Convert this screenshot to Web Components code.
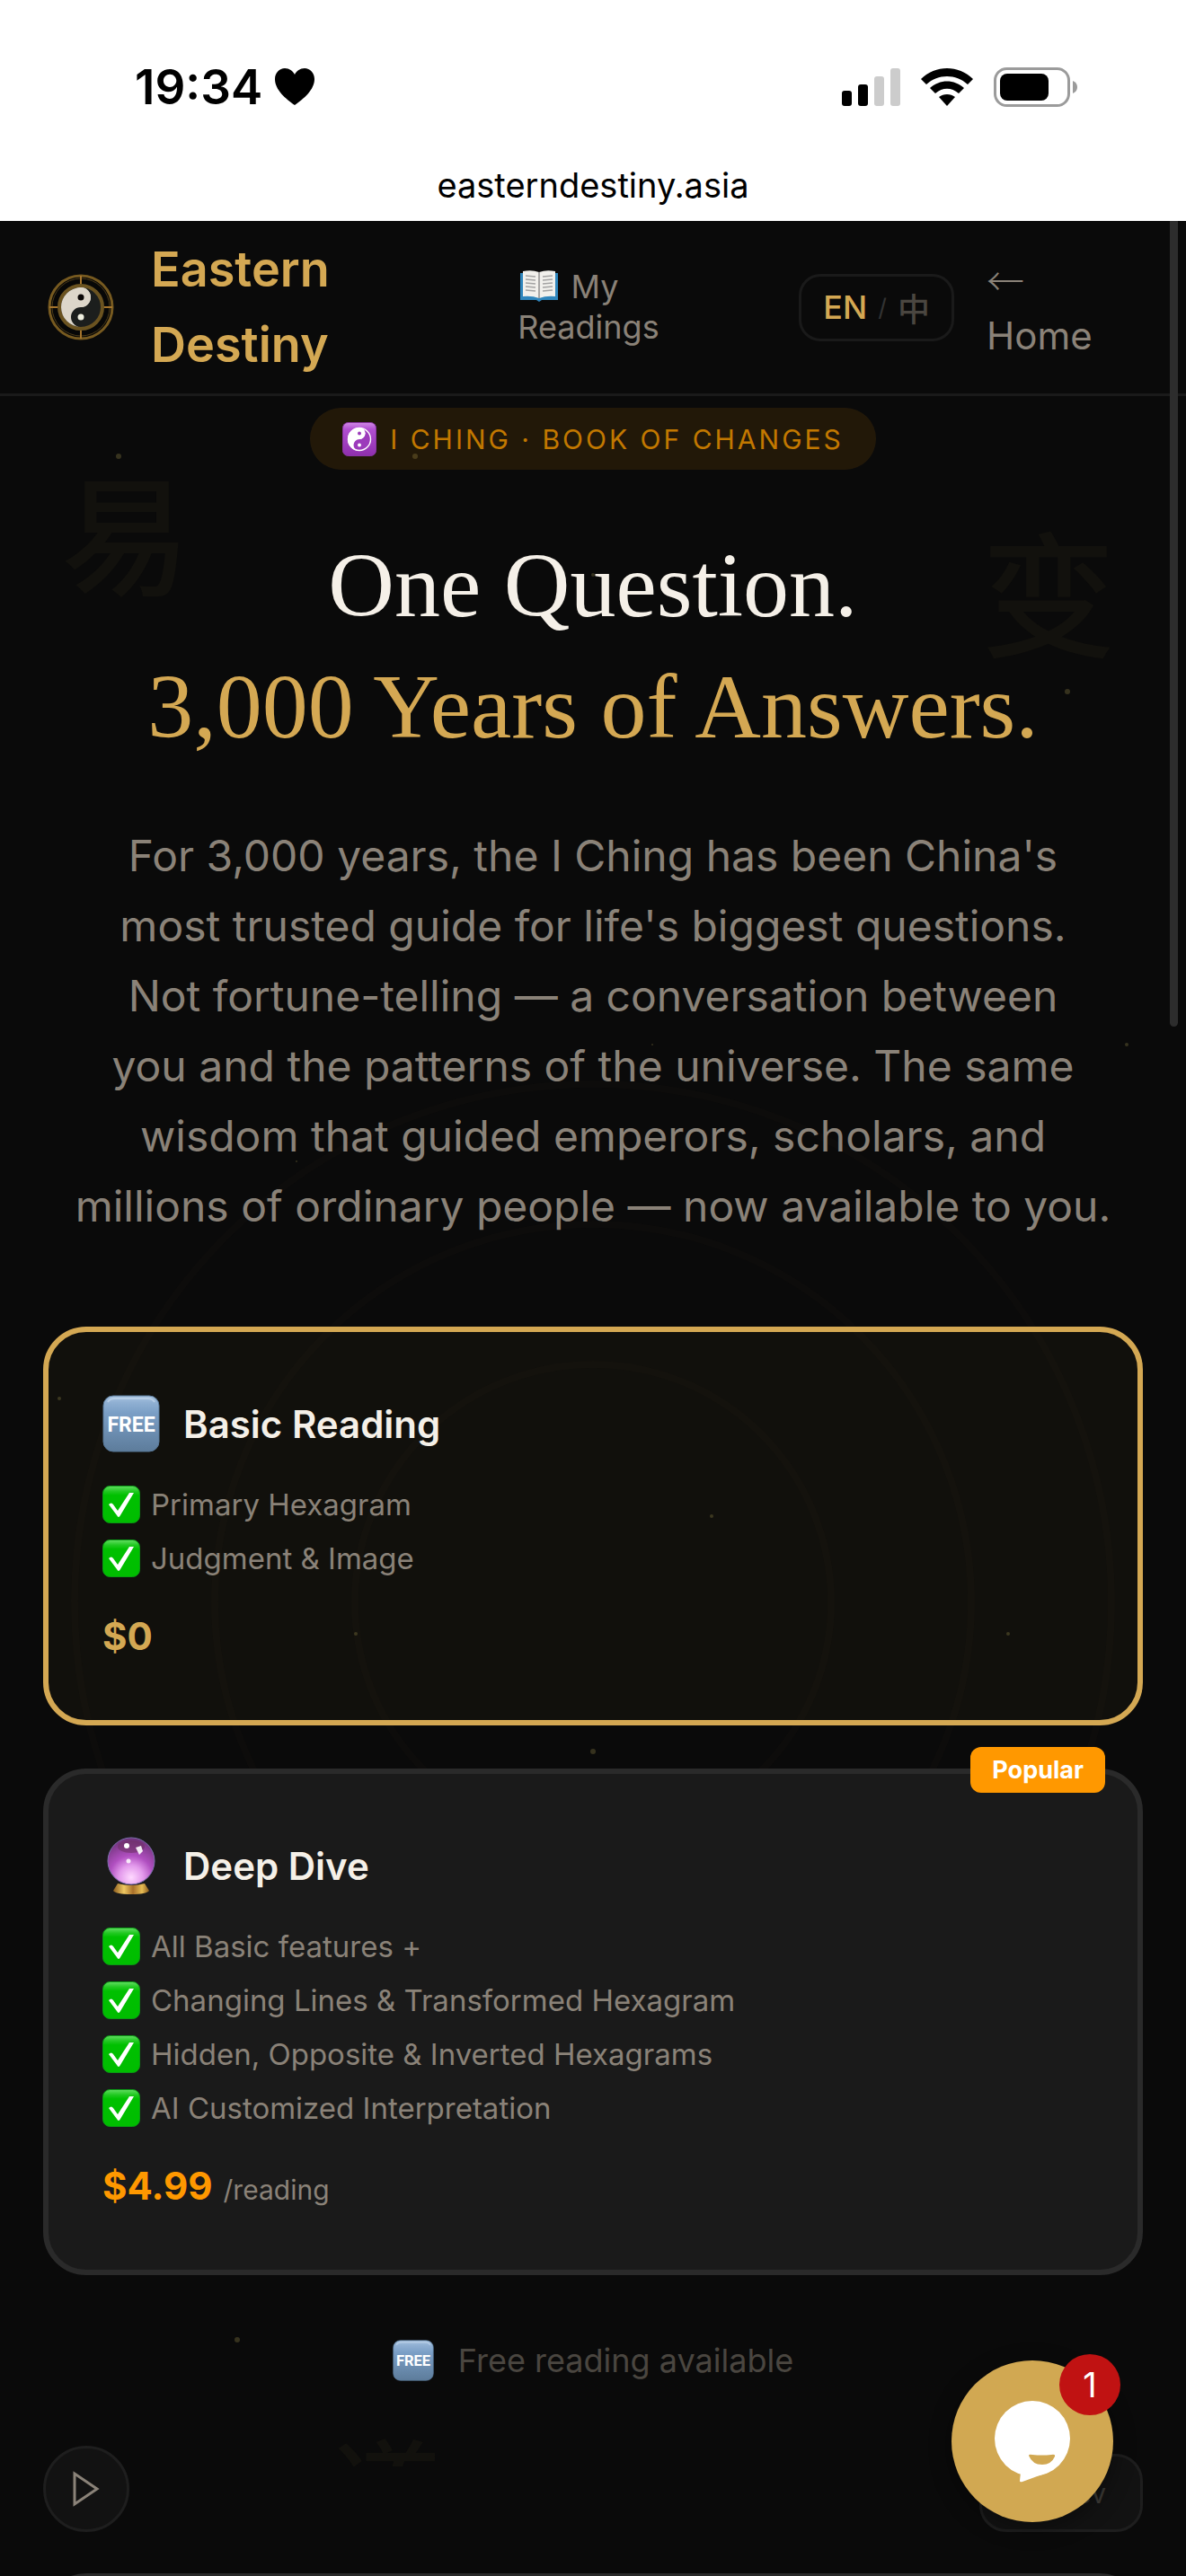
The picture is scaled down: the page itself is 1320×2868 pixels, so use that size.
<!DOCTYPE html>
<html lang="en">
<head>
<meta charset="utf-8">
<meta name="viewport" content="width=device-width, initial-scale=1">
<title>Eastern Destiny</title>
<style>
    html, body {
        margin: 0;
        background: #0a0a0a;
    }

    body {
        --gold: #d4a853;
        --orange: #ff9800;
        --muted: #8a8278;
        --text: #f5f0e8;
        height: 100vh;
        overflow: hidden;
        font-family: Inter, "Noto Sans CJK SC", sans-serif;
        color: var(--text);
    }
</style>
</head>
<body>
<destiny-app></destiny-app>

<script>
// shared drawings, used in more than one element
const icons = {
    free: `
    <svg viewBox="0 0 64 64" role="img" aria-label="free">
        <defs><linearGradient id="f" x1="0" y1="0" x2="0" y2="1">
            <stop offset="0" stop-color="#a9c4e0"/><stop offset=".12" stop-color="#90b0d3"/>
            <stop offset=".3" stop-color="#7b9fc6"/><stop offset="1" stop-color="#5d7c9b"/>
        </linearGradient></defs>
        <rect x="1" y="1" width="62" height="62" rx="11" fill="url(#f)" stroke="#587898" stroke-width="1"/>
        <path d="M6 8q2-4 8-4h36q6 0 8 4" fill="none" stroke="#c9dcf0" stroke-width="2" opacity=".6"/>
        <text x="32" y="41" text-anchor="middle" font-family="Roboto, sans-serif" font-weight="700" font-size="23" fill="#fff">FREE</text>
    </svg>`,
    check: `
    <svg viewBox="0 0 42 42" aria-hidden="true">
        <defs><linearGradient id="c" x1="0" y1="0" x2="0" y2="1">
            <stop offset="0" stop-color="#63dd63"/><stop offset=".14" stop-color="#22c922"/>
            <stop offset=".25" stop-color="#00c000"/><stop offset="1" stop-color="#00bd00"/>
        </linearGradient></defs>
        <rect x=".5" y=".5" width="41" height="41" rx="8" fill="url(#c)" stroke="#0a9a14"/>
        <path d="M7 21q3-3 5 0l5 7L30 8h5L20 33q-2 4-4 0z" fill="#fff"/>
    </svg>`,
    ball: `
    <svg viewBox="0 0 64 64" role="img" aria-label="crystal ball">
        <defs>
            <radialGradient id="b" cx=".5" cy=".85" r=".85">
                <stop offset="0" stop-color="#ffd9ff"/><stop offset=".3" stop-color="#e39aec"/>
                <stop offset=".55" stop-color="#b04fc0"/><stop offset="1" stop-color="#6d3277"/>
            </radialGradient>
            <linearGradient id="g"><stop offset="0" stop-color="#8a5a1c"/><stop offset=".3" stop-color="#f0c963"/>
                <stop offset=".55" stop-color="#a86f2a"/><stop offset=".8" stop-color="#e8bd54"/><stop offset="1" stop-color="#8a5a1c"/></linearGradient>
        </defs>
        <path d="M17 52q15 4 30 0l5 8q-3 4-20 4T12 60z" fill="url(#g)"/>
        <circle cx="32" cy="27" r="26" fill="url(#b)" stroke="#7d6fae" stroke-width="1"/>
        <ellipse cx="32" cy="11" rx="15" ry="7" fill="#6b2f60" opacity=".55"/>
        <circle cx="27" cy="10" r="3" fill="#fff"/>
        <path d="M37 12l6-2 2 6-4 4z" fill="#fff" opacity=".9"/>
        <circle cx="29" cy="27" r="2.5" fill="#fff" opacity=".85"/>
    </svg>`,
    yinyang: `
    <svg viewBox="0 0 38 38" aria-hidden="true">
        <defs><linearGradient id="y" x1="0" y1="0" x2="0" y2="1">
            <stop offset="0" stop-color="#d18ae6"/><stop offset=".2" stop-color="#b14fd0"/><stop offset="1" stop-color="#8f2fae"/>
        </linearGradient></defs>
        <rect x=".5" y=".5" width="37" height="37" rx="6" fill="url(#y)" stroke="#8a35a5"/>
        <circle cx="19" cy="19" r="12.5" fill="#9c3bbb" stroke="#fff" stroke-width="1.4"/>
        <path d="M19 6a13 13 0 0 0 0 26a6.5 6.5 0 0 1 0-13a6.5 6.5 0 0 0 0-13z" fill="#fff"/>
        <circle cx="19" cy="12.5" r="6.5" fill="#fff"/>
        <circle cx="19" cy="12.5" r="2" fill="#9c3bbb"/>
        <circle cx="19" cy="25.5" r="2" fill="#fff"/>
    </svg>`,
    book: `
    <svg viewBox="0 0 42 36" aria-hidden="true">
        <path d="M0 3h42v30H24l-3 2-3-2H0z" fill="#2f86bd"/>
        <path d="M3 1q10-2 18 1q8-3 18-1v28q-10-1-18 2q-8-3-18-2z" fill="#f1f0ec"/>
        <path d="M21 2v29" stroke="#8f8f8f" stroke-width="1.5"/>
        <path d="M6 6l11 1M6 10l11 1M6 14l11 1M6 18l11 1M6 22l11 1M25 7l11-1M25 11l11-1M25 15l11-1M25 19l11-1M25 23l11-1" stroke="#a3a3a3" stroke-width="1.5"/>
    </svg>`,
    logo: `
    <svg viewBox="0 0 74 74" role="img" aria-label="Eastern Destiny logo">
        <circle cx="37" cy="37" r="35" fill="#070707" stroke="#775a20" stroke-width="3"/>
        <circle cx="37" cy="37" r="32" fill="none" stroke="#4b3a18" stroke-width="1"/>
        <path d="M37 2v11M37 61v11M2 37h11M61 37h11" stroke="#a4742c" stroke-width="2"/>
        <circle cx="37" cy="37" r="24" fill="#1c1e1d" stroke="#6b5320" stroke-width="4"/>
        <path d="M37 15a22 22 0 0 0 0 44a11 11 0 0 1 0-22a11 11 0 0 0 0-22z" fill="#ddd6ca"/>
        <circle cx="37" cy="26" r="11" fill="#ddd6ca"/>
        <circle cx="37" cy="26" r="3.5" fill="#0b0706"/>
        <circle cx="37" cy="48" r="3.5" fill="#efefe0"/>
    </svg>`
};

class StatusBar extends HTMLElement {
    constructor() {
        super();
        this.attachShadow({ mode: "open" }).innerHTML = `
        <style>
            :host {
                display: block;
                background: #fff;
                color: #000;
                height: 246px;
            }
            .row {
                display: flex;
                justify-content: space-between;
                align-items: center;
                padding: 66px 120px 0 150px;
                height: 62px;
            }
            .time {
                display: flex;
                align-items: center;
                gap: 14px;
                font-size: 53px;
                font-weight: 600;
            }
            .signals {
                display: flex;
                align-items: center;
                gap: 23px;
            }
            svg { display: block; }
            .url {
                text-align: center;
                font-size: 38px;
                line-height: 48px;
                padding-top: 54px;
            }
        </style>
        <div class="row">
            <div class="time"><span>19:34</span>
                <svg width="44" height="42" viewBox="0 0 44 42" aria-hidden="true"><path d="M22 41C12 34 0 24 0 12C0 5 5 0 11 0c5 0 9 3 11 7c2-4 6-7 11-7c6 0 11 5 11 12c0 12-12 22-22 29z"/></svg>
            </div>
            <div class="signals">
                <svg width="65" height="42" viewBox="0 0 65 42" aria-hidden="true">
                    <rect y="25" width="11" height="17" rx="3"/>
                    <rect x="18" y="18" width="11" height="24" rx="3"/>
                    <rect x="36" y="9" width="11" height="33" rx="3" fill="#ccc"/>
                    <rect x="54" width="11" height="42" rx="3" fill="#ccc"/>
                </svg>
                <svg width="58" height="42" viewBox="0 0 58 42" aria-hidden="true">
                    <path d="M0 12C16-4 42-4 58 12l-6 6C39 6 19 6 6 18z"/>
                    <path d="M10 22C21 12 37 12 48 22l-6 6C34 21 24 21 16 28z"/>
                    <path d="M20 32C25 28 33 28 38 32L29 42z"/>
                </svg>
                <svg width="94" height="44" viewBox="0 0 94 44" aria-hidden="true">
                    <rect x="1.5" y="1.5" width="82" height="41" rx="13" fill="none" stroke="#9b9b9b" stroke-width="3"/>
                    <rect x="7" y="7" width="54" height="30" rx="8"/>
                    <path d="M88 15q5 2 5 7t-5 7z" fill="#9b9b9b"/>
                </svg>
            </div>
        </div>
        <div class="url">easterndestiny.asia</div>
        `;
    }
}

class SiteHeader extends HTMLElement {
    constructor() {
        super();
        this.attachShadow({ mode: "open" }).innerHTML = `
        <style>
            :host {
                display: grid;
                grid-template-columns: 16fr 9fr auto 174px;
                align-items: center;
                gap: 36px;
                box-sizing: border-box;
                height: 195px;
                padding: 0 48px;
                border-bottom: 3px solid #1a1a1a;
            }
            a {
                color: var(--muted);
                text-decoration: none;
            }
            .brand {
                display: flex;
                align-items: center;
                gap: 41px;
                padding-left: 5px;
                color: var(--gold);
                font-size: 54px;
                font-weight: 600;
                line-height: 84px;
            }
            .brand svg { width: 74px; height: 74px; }
            .readings {
                font-size: 36px;
                line-height: 45px;
            }
            .readings svg {
                width: 42px;
                height: 36px;
                margin: 0 4px 0 3px;
                vertical-align: -5px;
            }
            .home {
                font-size: 42px;
                line-height: 60px;
            }
            .arrow {
                font-family: "Noto Sans CJK SC", sans-serif;
                font-weight: 300;
            }
            button {
                display: flex;
                align-items: center;
                gap: 12px;
                box-sizing: border-box;
                height: 75px;
                padding: 0 24px;
                border: 3px solid #1a1a1a;
                border-radius: 24px;
                background: none;
                color: #4a4640;
                font: inherit;
                font-size: 36px;
                font-weight: 500;
            }
            button b { color: var(--gold); font-weight: 500; }
            button i { font-style: normal; font-size: 27px; font-weight: 400; color: #333; }
        </style>
        <a class="brand" href="#">${icons.logo}<span>Eastern<br>Destiny</span></a>
        <a class="readings" href="#readings">${icons.book} My<br>Readings</a>
        <button type="button" aria-label="Language"><b>EN</b><i>/</i><span>中</span></button>
        <a class="home" href="#home"><span class="arrow">←</span><br>Home</a>
        `;
    }
}

class SkyBackdrop extends HTMLElement {
    constructor() {
        super();
        const stars = [[132, 262, 3], [462, 262, 3], [660, 394, 2], [1188, 524, 3], [726, 917, 1], [1254, 917, 2],
            [330, 1047, 1], [66, 1311, 2], [792, 1442, 2], [396, 1573, 2], [1122, 1573, 2], [660, 1704, 3], [264, 2359, 3]];
        this.attachShadow({ mode: "open" }).innerHTML = `
        <style>
            :host {
                position: absolute;
                inset: 0;
                overflow: hidden;
                pointer-events: none;
            }
            .sky { display: block; width: 1320px; height: 2622px; margin: 0 auto; }
            text { font-family: "Noto Sans CJK SC", sans-serif; font-weight: 500; fill: #12110d; }
        </style>
        <svg class="sky" viewBox="0 0 1320 2622" aria-hidden="true">
            <g fill="none" stroke="#d4a853" stroke-opacity=".02" stroke-width="8">
                <circle cx="660" cy="1538" r="265"/>
                <circle cx="660" cy="1538" r="421"/>
                <circle cx="660" cy="1538" r="577"/>
            </g>
            <text x="68" y="406" font-size="144">易</text>
            <text x="1092" y="474" font-size="150">变</text>
            <svg x="370" y="2464" width="120" height="36"><text x="0" y="108" font-size="120">道</text></svg>
            ${stars.map(([x, y, r]) => `<circle cx="${x}" cy="${y}" r="${r}" fill="#6d6338" opacity=".45"/>`).join("")}
        </svg>
        `;
    }
}

class HeroIntro extends HTMLElement {
    constructor() {
        super();
        this.attachShadow({ mode: "open" }).innerHTML = `
        <style>
            :host {
                display: flex;
                flex-direction: column;
                align-items: center;
                padding: 13px 72px 95px;
                text-align: center;
            }
            .pill {
                display: flex;
                align-items: center;
                gap: 15px;
                height: 69px;
                padding: 0 36px;
                border-radius: 36px;
                background: rgba(255, 160, 0, .1);
                color: #c27800;
                font-size: 30px;
                letter-spacing: 3px;
            }
            .pill svg { width: 38px; height: 38px; }
            h1 {
                margin: 61px 0 60px;
                font-family: "Liberation Serif", serif;
                font-size: 102px;
                font-weight: 400;
                line-height: 135px;
            }
            h1 em { font-style: normal; color: var(--gold); }
            p {
                margin: 0;
                color: var(--muted);
                font-size: 48px;
                line-height: 78px;
            }
        </style>
        <div class="pill">${icons.yinyang}<span>I CHING · BOOK OF CHANGES</span></div>
        <h1>One Question.<br><em>3,000 Years of Answers.</em></h1>
        <p>For 3,000 years, the I Ching has been China's<br>
        most trusted guide for life's biggest questions.<br>
        Not fortune-telling — a conversation between<br>
        you and the patterns of the universe. The same<br>
        wisdom that guided emperors, scholars, and<br>
        millions of ordinary people — now available to you.</p>
        `;
    }
}

class PlanCard extends HTMLElement {
    constructor() {
        super();
        this.attachShadow({ mode: "open" });
    }

    connectedCallback() {
        const icon = icons[this.getAttribute("icon")];
        const badge = this.getAttribute("badge");
        const unit = this.getAttribute("unit");
        const features = this.getAttribute("features").split("|");

        this.shadowRoot.innerHTML = `
        <style>
            :host {
                display: block;
                position: relative;
                padding: 60px;
                border: 6px solid #2a2a2a;
                border-radius: 48px;
                background: #1a1a1a;
            }
            :host([selected]) {
                border-color: var(--gold);
                background: rgba(212, 168, 83, .04);
            }
            .head {
                display: flex;
                align-items: center;
                gap: 26px;
                height: 84px;
            }
            .head svg { width: 64px; height: 64px; }
            h2 {
                margin: 0;
                font-size: 42px;
                font-weight: 600;
            }
            ul {
                margin: 18px 0 24px;
                padding: 0;
                list-style: none;
                color: var(--muted);
                font-size: 33px;
                line-height: 60px;
            }
            li {
                display: flex;
                align-items: center;
                gap: 12px;
            }
            li svg { width: 42px; height: 42px; }
            .price {
                display: flex;
                align-items: baseline;
                gap: 12px;
                height: 66px;
                line-height: 66px;
                font-size: 30px;
                color: var(--muted);
            }
            .price b {
                color: var(--orange);
                font-size: 42px;
                font-weight: 700;
            }
            :host([selected]) .price b { color: var(--gold); }
            .badge {
                position: absolute;
                top: -30px;
                right: 36px;
                padding: 0 24px;
                border-radius: 12px;
                background: var(--orange);
                color: #fff;
                font-size: 27px;
                font-weight: 700;
                line-height: 51px;
            }
        </style>
        ${badge ? `<span class="badge">${badge}</span>` : ""}
        <div class="head">${icon}<h2><slot></slot></h2></div>
        <ul>${features.map(f => `<li>${icons.check}<span>${f}</span></li>`).join("")}</ul>
        <div class="price"><b>${this.getAttribute("price")}</b>${unit ? `<span>${unit}</span>` : ""}</div>
        `;
    }
}

class ChatWidget extends HTMLElement {
    constructor() {
        super();
        this.attachShadow({ mode: "open" }).innerHTML = `
        <style>
            :host {
                position: fixed;
                right: 81px;
                bottom: 60px;
            }
            button {
                display: block;
                width: 180px;
                height: 180px;
                padding: 0;
                border: 0;
                border-radius: 50%;
                background: #d1a852;
                box-shadow: 0 6px 24px rgba(0, 0, 0, .4);
            }
            svg { display: block; }
            .count {
                position: absolute;
                top: -7px;
                right: -8px;
                width: 68px;
                border-radius: 50%;
                background: #c01212;
                color: #fff;
                font-size: 38px;
                line-height: 68px;
                text-align: center;
            }
        </style>
        <button type="button" aria-label="Open chat">
            <svg width="180" height="180" viewBox="0 0 180 180">
                <circle cx="90" cy="87" r="42" fill="#fff"/>
                <path d="M77 124l-1 10q0 2 3 1l30-11l-8-10z" fill="#fff"/>
                <path d="M86 106q0-2 4-1q11 1 21 0q5-1 4 2q-4 9-14 9q-11 0-15-10z" fill="#d1a852"/>
            </svg>
        </button>
        <span class="count">1</span>
        `;
    }
}

class DestinyApp extends HTMLElement {
    constructor() {
        super();
        this.attachShadow({ mode: "open" }).innerHTML = `
        <style>
            :host { display: block; }
            .page { position: relative; }
            main { position: relative; }
            .plans {
                display: flex;
                flex-direction: column;
                gap: 48px;
                padding: 0 48px;
            }
            .note {
                display: flex;
                justify-content: center;
                align-items: center;
                gap: 27px;
                margin: 65px 0;
                color: #4a4640;
                font-size: 36px;
                line-height: 60px;
            }
            .note svg { width: 46px; height: 46px; }
            .tools {
                display: flex;
                justify-content: space-between;
                align-items: flex-end;
                margin: 0 48px 46px;
            }
            .tools button {
                box-sizing: border-box;
                border: 3px solid #1e1e1e;
                background: #121212;
            }
            .play {
                display: grid;
                place-items: center;
                width: 96px;
                height: 96px;
                padding: 0;
                border-radius: 50%;
            }
            .dev {
                height: 87px;
                width: 182px;
                padding: 0 38px;
                border-radius: 30px;
                color: #3c3a36;
                font: inherit;
                font-size: 30px;
                text-align: right;
            }
            .next {
                height: 120px;
                margin: 0 48px;
                border: 3px solid #2a2a2a;
                border-radius: 48px;
            }
            /* scroll thumb */
            .thumb {
                position: absolute;
                top: 0;
                right: 9px;
                width: 9px;
                height: 897px;
                border-radius: 0 0 5px 5px;
                background: #2d2d2d;
            }
        </style>
        <status-bar></status-bar>
        <div class="page">
            <sky-backdrop></sky-backdrop>
            <main>
                <site-header></site-header>
                <hero-intro></hero-intro>
                <div class="plans">
                    <plan-card selected icon="free" price="$0" features="Primary Hexagram|Judgment &amp;amp; Image">Basic Reading</plan-card>
                    <plan-card icon="ball" badge="Popular" price="$4.99" unit="/reading"
                        features="All Basic features +|Changing Lines &amp;amp; Transformed Hexagram|Hidden, Opposite &amp;amp; Inverted Hexagrams|AI Customized Interpretation">Deep Dive</plan-card>
                </div>
                <div class="note">${icons.free}<span>Free reading available</span></div>
                <div class="tools">
                    <button class="play" type="button" aria-label="Play music">
                        <svg width="32" height="42" viewBox="0 0 32 42"><path d="M3 4v34l25-17z" fill="none" stroke="#8a8278" stroke-width="3"/></svg>
                    </button>
                    <button class="dev" type="button">Dev</button>
                </div>
                <div class="next"></div>
            </main>
            <div class="thumb"></div>
        </div>
        <chat-widget></chat-widget>
        `;
    }
}

customElements.define("status-bar", StatusBar);
customElements.define("site-header", SiteHeader);
customElements.define("sky-backdrop", SkyBackdrop);
customElements.define("hero-intro", HeroIntro);
customElements.define("plan-card", PlanCard);
customElements.define("chat-widget", ChatWidget);
customElements.define("destiny-app", DestinyApp);
</script>
</body>
</html>
